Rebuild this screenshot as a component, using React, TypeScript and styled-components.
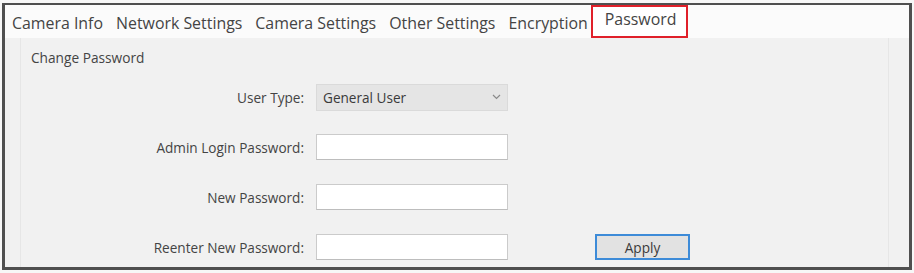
import styled, { createGlobalStyle } from "styled-components";

const Global = createGlobalStyle`
  html, body {
    margin: 0;
    padding: 0;
    background: #f7f7f7;
  }
  * {
    box-sizing: border-box;
  }
`;

const Frame = styled.div`
  margin: 3px 0 0 2px;
  width: 910px;
  height: 267px;
  border: 3px solid #4f4f4f;
  border-top-width: 2px;
  display: flex;
  flex-direction: column;
  font-family: "Open Sans", "Noto Sans", sans-serif;
  color: #444444;
`;

const TabBar = styled.div`
  height: 33px;
  background: #fbfbfb;
  display: flex;
  align-items: stretch;
  gap: 1px;
  font-size: 15.9px;
`;

const Tab = styled.div<{ $active?: boolean }>`
  display: flex;
  align-items: center;
  padding: ${(p) => (p.$active ? "0 10px 5px 12px" : "3px 6px 0")};
  margin-left: ${(p) => (p.$active ? "-4px" : "0")};
  border: ${(p) => (p.$active ? "2px solid #e0202a" : "none")};
  background: ${(p) => (p.$active ? "#ffffff" : "transparent")};
  white-space: nowrap;
  &:first-child {
    padding-left: 7px;
  }
`;

const Panel = styled.div`
  flex: 1;
  background: #f1f1f1;
  padding: 0 20px 0 15px;
  display: flex;
`;

const GroupBox = styled.div`
  flex: 1;
  border-left: 1px solid #e6e6e6;
  border-right: 1px solid #e6e6e6;
  padding: 9px 0 0 0;
`;

const Title = styled.div`
  padding-left: 10px;
  height: 22px;
  line-height: 22px;
  font-size: 13.7px;
`;

const Form = styled.div`
  margin-top: 15px;
  display: grid;
  grid-template-columns: 283px 192px 63px 95px;
  grid-auto-rows: 26px;
  column-gap: 12px;
  row-gap: 24px;
  align-items: center;
`;

const Label = styled.div`
  grid-column: 1;
  text-align: right;
  font-size: 13.6px;
  white-space: nowrap;
`;

const Select = styled.div`
  grid-column: 2;
  height: 27px;
  background: #e5e5e5;
  border: 1px solid #dadada;
  display: flex;
  align-items: center;
  justify-content: space-between;
  padding: 0 6px 0 6px;
  font-size: 13.6px;
  color: #3a3a3a;
`;

const Input = styled.div`
  grid-column: 2;
  height: 26px;
  background: #ffffff;
  border: 1px solid #cbcbcb;
  border-bottom-color: #bdbdbd;
`;

const Button = styled.div`
  grid-column: 4;
  height: 26px;
  background: #e2e2e2;
  border: 2px solid #3d8bd8;
  display: flex;
  align-items: center;
  justify-content: center;
  font-size: 13.6px;
  color: #3a3a3a;
`;

const tabs = [
  "Camera Info",
  "Network Settings",
  "Camera Settings",
  "Other Settings",
  "Encryption",
  "Password",
];

export default function App() {
  return (
    <>
      <Global />
      <Frame>
        <TabBar>
          {tabs.map((t) => (
            <Tab key={t} $active={t === "Password"}>
              {t}
            </Tab>
          ))}
        </TabBar>
        <Panel>
          <GroupBox>
            <Title>Change Password</Title>
            <Form>
              <Label>User Type:</Label>
              <Select>
                <span>General User</span>
                <svg width="9" height="6" viewBox="0 0 9 6">
                  <path d="M1 1l3.5 3.5L8 1" fill="none" stroke="#8a8a8a" strokeWidth="1.2" />
                </svg>
              </Select>
              <Label>Admin Login Password:</Label>
              <Input />
              <Label>New Password:</Label>
              <Input />
              <Label>Reenter New Password:</Label>
              <Input />
              <Button>Apply</Button>
            </Form>
          </GroupBox>
        </Panel>
      </Frame>
    </>
  );
}
